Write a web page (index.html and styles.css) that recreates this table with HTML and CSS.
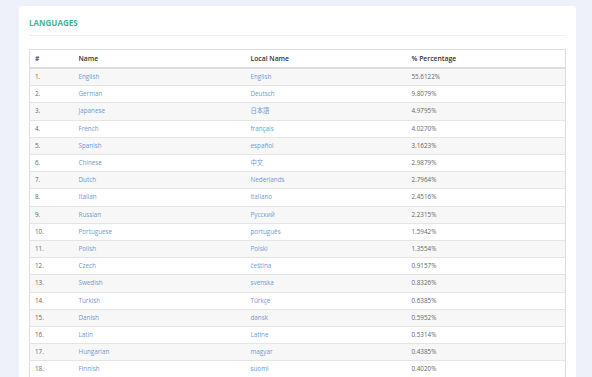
FILE: index.html
```html
<!DOCTYPE html>
<html>
<head>
<meta charset="utf-8">
<link rel="stylesheet" href="styles.css">
</head>
<body>
<div class="card">
  <div class="card-head"><h2 class="title">LANGUAGES</h2></div>
  <table class="lang-table">
    <colgroup><col class="c1"><col class="c2"><col class="c3"><col class="c4"></colgroup>
    <thead>
      <tr><th>#</th><th>Name</th><th>Local Name</th><th>% Percentage</th></tr>
    </thead>
    <tbody>
      <tr><td>1.</td><td><a>English</a></td><td><a>English</a></td><td>55.6122%</td></tr>
      <tr><td>2.</td><td><a>German</a></td><td><a>Deutsch</a></td><td>9.8079%</td></tr>
      <tr><td>3.</td><td><a>Japanese</a></td><td><a>日本語</a></td><td>4.9795%</td></tr>
      <tr><td>4.</td><td><a>French</a></td><td><a>français</a></td><td>4.0270%</td></tr>
      <tr><td>5.</td><td><a>Spanish</a></td><td><a>español</a></td><td>3.1623%</td></tr>
      <tr><td>6.</td><td><a>Chinese</a></td><td><a>中文</a></td><td>2.9879%</td></tr>
      <tr><td>7.</td><td><a>Dutch</a></td><td><a>Nederlands</a></td><td>2.7964%</td></tr>
      <tr><td>8.</td><td><a>Italian</a></td><td><a>italiano</a></td><td>2.4516%</td></tr>
      <tr><td>9.</td><td><a>Russian</a></td><td><a>Русский</a></td><td>2.2315%</td></tr>
      <tr><td>10.</td><td><a>Portuguese</a></td><td><a>português</a></td><td>1.5942%</td></tr>
      <tr><td>11.</td><td><a>Polish</a></td><td><a>Polski</a></td><td>1.3554%</td></tr>
      <tr><td>12.</td><td><a>Czech</a></td><td><a>čeština</a></td><td>0.9157%</td></tr>
      <tr><td>13.</td><td><a>Swedish</a></td><td><a>svenska</a></td><td>0.8326%</td></tr>
      <tr><td>14.</td><td><a>Turkish</a></td><td><a>Türkçe</a></td><td>0.6385%</td></tr>
      <tr><td>15.</td><td><a>Danish</a></td><td><a>dansk</a></td><td>0.5952%</td></tr>
      <tr><td>16.</td><td><a>Latin</a></td><td><a>Latine</a></td><td>0.5314%</td></tr>
      <tr><td>17.</td><td><a>Hungarian</a></td><td><a>magyar</a></td><td>0.4385%</td></tr>
      <tr><td>18.</td><td><a>Finnish</a></td><td><a>suomi</a></td><td>0.4020%</td></tr>
    </tbody>
  </table>
</div>
</body>
</html>
```
FILE: styles.css
```css
html, body {
  margin: 0;
  padding: 0;
  background: #eef1f9;
  font-family: "Open Sans", "Noto Sans CJK JP", sans-serif;
  overflow: hidden;
  height: 377px;
}
.card {
  margin: 6px 16px 0 19px;
  background: #fff;
  border-radius: 3px;
  padding: 0 10px 20px 10px;
}
.card-head {
  height: 29px;
  border-bottom: 1px solid #eef0f3;
  display: flex;
  align-items: center;
  margin-bottom: 13px;
}
.title {
  margin: 0;
  padding-top: 4px;
  font-size: 8px;
  font-weight: 700;
  color: #48b49a;
  letter-spacing: 0;
}
.lang-table {
  width: 100%;
  border-collapse: collapse;
  border: 1px solid #dddddd;
  table-layout: fixed;
  font-size: 6.3px;
  color: #666;
}
.c1 { width: 44px; }
.c2 { width: 172px; }
.c3 { width: 161px; }
.c4 { width: auto; }
.lang-table th {
  text-align: left;
  font-weight: 600;
  color: #333;
  font-size: 6.8px;
  line-height: 11px;
  padding: 3px 5px 3px 5px;
  height: 11px;
  border-bottom: 2px solid #dddddd;
}
.lang-table td {
  line-height: 10.2px;
  padding: 3px 5px;
  border-top: 1px solid #e4e4e4;
  vertical-align: middle;
}
.lang-table tbody tr:nth-child(odd) td {
  background: #f7f7f7;
}
.lang-table a {
  color: #6f9bd2;
  text-decoration: none;
}
```
